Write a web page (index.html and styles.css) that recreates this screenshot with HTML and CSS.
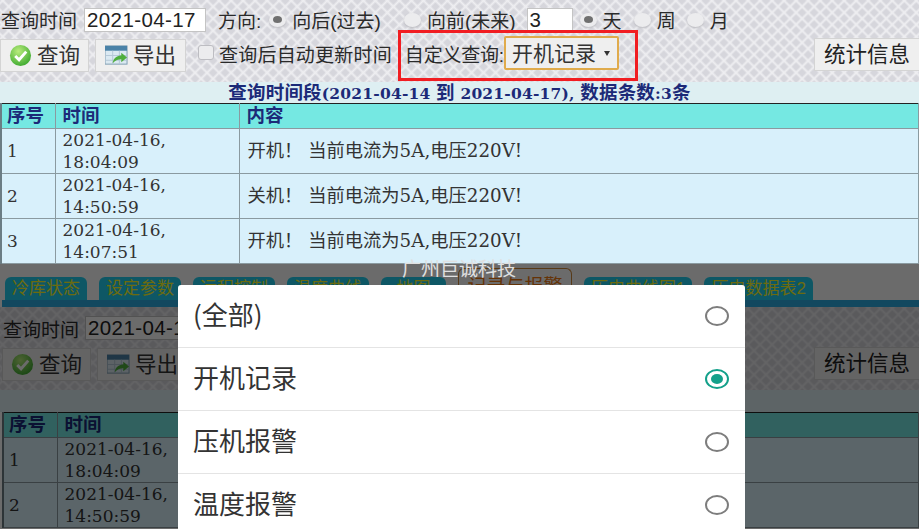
FILE: index.html
```html
<!DOCTYPE html>
<html lang="zh">
<head>
<meta charset="utf-8">
<title>查询</title>
<link rel="stylesheet" href="styles.css">
</head>
<body>
<section class="screen top">
  <div class="toolbar">
    <div class="row row-a">
      <span>查询时间</span><span class="input date">2021-04-17</span>
      <span class="ml12">方向:</span>
      <span class="radio on ml8"></span><span>向后(过去)</span>
      <span class="radio ml23"></span><span>向前(未来)</span>
      <span class="input num">3</span>
      <span class="radio on ml7"></span><span>天</span>
      <span class="radio ml12"></span><span>周</span>
      <span class="radio ml11"></span><span>月</span>
    </div>
    <div class="row row-b">
      <span class="btn"><svg class="ico" viewBox="0 0 24 24"><use href="#ok"/></svg>查询</span>
      <span class="btn"><svg class="ico" viewBox="0 0 24 24"><use href="#xl"/></svg>导出</span>
      <span class="check"></span><span class="auto">查询后自动更新时间</span>
      <span class="custom"><span class="custom-label">自定义查询:</span><span class="select">开机记录<i class="caret"></i></span></span>
      <span class="btn stat">统计信息</span>
    </div>
  </div>
  <div class="summary"><span class="cj">查询时间段</span>(2021-04-14 <span class="cj">到</span> 2021-04-17), <span class="cj">数据条数</span>:3<span class="cj">条</span></div>
  <table class="grid">
    <thead><tr><th class="c1">序号</th><th class="c2">时间</th><th>内容</th></tr></thead>
    <tbody>
      <tr><td>1</td><td>2021-04-16, 18:04:09</td><td class="msg">开机！ 当前电流为5A,电压220V!</td></tr>
      <tr><td>2</td><td>2021-04-16, 14:50:59</td><td class="msg">关机！ 当前电流为5A,电压220V!</td></tr>
      <tr><td>3</td><td>2021-04-16, 14:07:51</td><td class="msg">开机！ 当前电流为5A,电压220V!</td></tr>
    </tbody>
  </table>
</section>

<section class="screen bottom">
  <nav class="tabs">
    <span class="tab">冷库状态</span><span class="tab">设定参数</span><span class="tab">远程控制</span><span class="tab">温度曲线</span><span class="tab wide">地图</span><span class="tab cur">记录与报警</span><span class="tab">历史曲线图1</span><span class="tab">历史数据表2</span>
  </nav>
  <div class="toolbar low">
    <div class="row row-a"><span>查询时间</span><span class="input date">2021-04-17</span></div>
    <div class="row row-b">
      <span class="btn"><svg class="ico" viewBox="0 0 24 24"><use href="#ok"/></svg>查询</span>
      <span class="btn"><svg class="ico" viewBox="0 0 24 24"><use href="#xl"/></svg>导出</span>
      <span class="btn stat">统计信息</span>
    </div>
  </div>
  <div class="summary blank"></div>
  <table class="grid inset">
    <thead><tr><th class="c1">序号</th><th class="c2">时间</th><th>内容</th></tr></thead>
    <tbody>
      <tr><td>1</td><td>2021-04-16, 18:04:09</td><td></td></tr>
      <tr><td>2</td><td>2021-04-16, 14:50:59</td><td></td></tr>
    </tbody>
  </table>
  <div class="scrim"></div>
</section>

<div class="brand">广州巨诚科技</div>

<ul class="dialog">
  <li><span class="label">(全部)</span><span class="opt"></span></li>
  <li><span class="label">开机记录</span><span class="opt sel"></span></li>
  <li><span class="label">压机报警</span><span class="opt"></span></li>
  <li><span class="label">温度报警</span><span class="opt"></span></li>
</ul>

<svg class="defs" width="0" height="0" aria-hidden="true">
  <defs>
    <radialGradient id="g" cx="40%" cy="30%" r="75%"><stop offset="0" stop-color="#b9ec7c"/><stop offset="1" stop-color="#3aa82e"/></radialGradient>
    <symbol id="ok" viewBox="0 0 24 24">
      <circle cx="12" cy="12" r="11" fill="url(#g)"/>
      <path d="M6.5 12.5l4 4 7.5-8.5" fill="none" stroke="#fff" stroke-width="3"/>
    </symbol>
    <symbol id="xl" viewBox="0 0 24 24">
      <rect x="0" y="2" width="23" height="19" fill="#dbe9f2" stroke="#7d9bb0"/>
      <rect x="0" y="2" width="23" height="5" fill="#4a82a8"/>
      <path d="M1 12h21M1 17h21M8 7v14M15 7v14" stroke="#b4c8d6" stroke-width="1"/>
      <path d="M8 20c1-6 5-8 9-8v-3l6 5-6 5v-3c-3 0-6 1-9 4z" fill="#4eae3c"/>
    </symbol>
  </defs>
</svg>
</body>
</html>
```
FILE: styles.css
```css
* { box-sizing: border-box; }
html, body { margin: 0; padding: 0; }
body {
  width: 919px;
  height: 529px;
  overflow: hidden;
  position: relative;
  background: #6b6b6b;
  font-family: "Liberation Sans", "Noto Sans CJK SC", sans-serif;
  color: #2a2a2a;
}
.defs { position: absolute; }
.screen { overflow: hidden; }
.top { height: 264px; background: #d8f0fb; }
.bottom { height: 265px; position: relative; background: #fff; }

.toolbar {
  height: 82px;
  background-color: #d6d6dc;
  background-image:
    repeating-linear-gradient(45deg, #eeeef1 0, transparent 2px, transparent 6.5px, #eeeef1 8.5px),
    repeating-linear-gradient(-45deg, #eeeef1 0, transparent 2px, transparent 6.5px, #eeeef1 8.5px);
}
.row { display: flex; align-items: center; font-size: 19px; white-space: nowrap; }
.row-a { height: 37px; padding: 2px 0 0 1px; }
.row-b { height: 36px; }
.ml7 { margin-left: 7px; }
.ml8 { margin-left: 8px; }
.ml11 { margin-left: 11px; }
.ml12 { margin-left: 12px; }
.ml23 { margin-left: 23px; }

.input {
  background: #fff;
  border: 1px solid #c4c4c4;
  display: inline-block;
  height: 24px;
  line-height: 22px;
  padding-left: 2px;
  font-size: 20.5px;
  color: #222;
}
.date { width: 122px; margin-left: 7px; letter-spacing: .4px; }
.num { width: 46px; margin-left: 11px; }

.radio {
  width: 17px;
  height: 14px;
  border-radius: 50%;
  background: #ececee;
  box-shadow: 0 1px 2px #b9b9be;
  margin-right: 6px;
  position: relative;
  flex: none;
}
.radio.on::after {
  content: "";
  position: absolute;
  left: 4px; top: 3px;
  width: 9px; height: 7px;
  border-radius: 50%;
  background: #707070;
}

.btn {
  display: inline-flex;
  align-items: center;
  height: 33px;
  background: #efefef;
  border: 1px solid #d4d4d4;
  font-size: 21.5px;
  color: #333;
  padding: 0 9px 3px;
  margin-right: 6px;
  flex: none;
}
.btn:first-child { padding: 0 8px 3px; }
.ico { width: 23px; height: 23px; margin-right: 5px; margin-top: 3px; }
.stat { margin-left: auto; margin-right: -1px; padding: 0 9px 3px; margin-top: -2px; color: #222; }
.check {
  width: 16px; height: 15px;
  background: #ececee;
  border: 1px solid #bdbdc2;
  border-radius: 3px;
  margin: -6px 5px 0 6px;
}
.auto { letter-spacing: .2px; padding-bottom: 4px; }
.custom {
  display: inline-flex;
  align-items: center;
  flex: none;
  height: 51px;
  width: 240px;
  margin-left: 6px;
  padding: 0 0 4px 4px;
  border: 3px solid #f11d22;
}
.custom-label { letter-spacing: -.2px; }
.select {
  height: 34px;
  width: 115px;
  display: inline-flex;
  align-items: center;
  background: #efefef;
  border: 2px solid #e0ab4c;
  border-radius: 2px;
  font-size: 21px;
  padding: 0 0 3px 6px;
  color: #333;
}
.caret {
  width: 0; height: 0;
  margin-left: 8px;
  margin-top: 3px;
  border-left: 3.5px solid transparent;
  border-right: 3.5px solid transparent;
  border-top: 5px solid #333;
}

.summary {
  height: 21px;
  background: #deeff2;
  text-align: center;
  color: #1c2a78;
  font-family: "DejaVu Serif", "Noto Sans CJK SC", serif;
  font-weight: bold;
  font-size: 15.5px;
  line-height: 19px;
  letter-spacing: .2px;
  white-space: nowrap;
}
.cj { font-size: 18.5px; font-family: "Noto Sans CJK SC", sans-serif; }
.summary.blank { height: 22px; }

.grid {
  width: 919px;
  border-collapse: collapse;
  table-layout: fixed;
  background: #d8f0fb;
  border-top: 1px solid #222;
  font-family: "DejaVu Serif", "Noto Sans CJK SC", serif;
  font-size: 17px;
  color: #333;
}
.grid.inset { width: 917px; margin-left: 2px; }
.grid .c1 { width: 54px; padding-left: 5px; border-left: 2px solid #6b7d84; }
.grid .c2 { width: 184px; }
.grid th {
  height: 24px;
  background: #75e8e2;
  color: #1c2a78;
  text-align: left;
  padding-right: 0;
  padding-top: 0;
  padding-bottom: 4px;
  font-family: "Noto Sans CJK SC", sans-serif;
  font-size: 18.5px;
  line-height: 20px;
  border-right: 1px solid #8a9aa0;
  border-bottom: 1px solid #8a9aa0;
}
.grid th + th { padding-left: 7px; }
.grid td {
  height: 45px;
  padding: 0 30px 0 7px;
  line-height: 22px;
  border-right: 1px solid #8a9aa0;
  border-bottom: 1px solid #8a9aa0;
}
.grid td:first-child { border-left: 2px solid #6b7d84; padding-left: 5px; }
.grid .msg { font-size: 18.3px; padding-left: 8px; }

.tabs {
  height: 43px;
  margin-left: 2px;
  padding: 0 0 0 3px;
  display: flex;
  gap: 12px;
  background: #fff;
  border-bottom: 7px solid #2bace3;
  align-items: flex-end;
  overflow: hidden;
}
.tab {
  height: 23px;
  line-height: 23px;
  padding: 0 7px;
  background: #22d0f0;
  border-radius: 6px 6px 0 0;
  color: #ffff26;
  font-size: 17px;
  white-space: nowrap;
  flex: none;
}
.tab.wide { padding: 0 15.5px; }
.tab.cur {
  height: 32px;
  line-height: 36px;
  padding: 0 8.5px;
  background: #fff;
  color: #f07a10;
  font-size: 19px;
  border: 1px solid #d08a3a;
  border-bottom: 0;
}
.low { height: 83px; }
.low .row-a { height: 39px; padding: 3px 0 0 3px; }
.low .row-b { padding-left: 2px; }
.low .date { margin-left: 6px; }

.scrim { position: absolute; inset: 0; background: rgba(0,0,0,.58); }

.brand {
  position: absolute;
  left: 402px; top: 255px;
  color: #e0e0e0;
  font-family: "Noto Sans CJK SC", sans-serif;
  font-size: 19px;
  line-height: 26px;
}

.dialog {
  position: absolute;
  left: 178px; top: 285px;
  width: 567px;
  height: 244px;
  margin: 0; padding: 0;
  list-style: none;
  background: #fff;
  border-radius: 3px 3px 0 0;
  font-family: "Noto Sans CJK SC", sans-serif;
  font-size: 26px;
  color: #333;
  overflow: hidden;
}
.dialog li {
  height: 63px;
  display: flex;
  align-items: center;
  justify-content: space-between;
  padding: 0 16px 0 15px;
  border-bottom: 1px solid #e4e4e4;
}
.label { line-height: 34px; margin-top: -5px; }
.opt {
  width: 24px; height: 20px;
  border: 2px solid #7d7d7d;
  border-radius: 50%;
  position: relative;
}
.opt.sel { border-color: #13a08a; }
.opt.sel::after {
  content: "";
  position: absolute;
  left: 4px; top: 3px;
  width: 12px; height: 10px;
  border-radius: 50%;
  background: #13a08a;
}
```
